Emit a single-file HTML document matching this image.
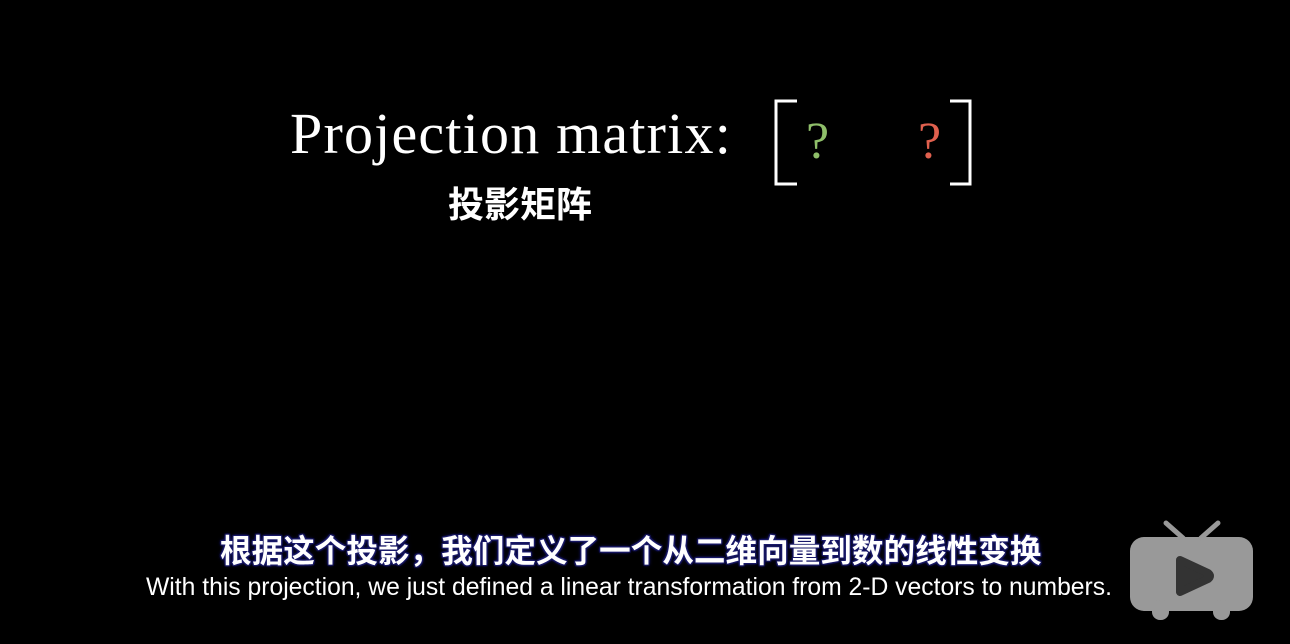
<!DOCTYPE html>
<html><head><meta charset="utf-8"><style>
html,body{margin:0;padding:0;background:#000;width:1290px;height:644px;overflow:hidden;position:relative}
.t{position:absolute;white-space:nowrap}
.title{left:290px;top:100px;font:58px "Liberation Serif",serif;color:#fff;letter-spacing:1.2px}
.sub{left:448px;top:176px;font:bold 36px "Liberation Sans","Noto Sans CJK SC",sans-serif;color:#fff}
.q{font:52px "Liberation Serif",serif;top:112px}
.zh{left:220px;top:526px;font:bold 31.6px "Liberation Sans","Noto Sans CJK SC",sans-serif;color:#fff;
text-shadow:0 0 2px #1a1a6a,1px 1px 1px #1a1a6a,-1px -1px 1px #1a1a6a,1px -1px 1px #1a1a6a,-1px 1px 1px #1a1a6a,0 0 4px #20208a}
.en{left:146px;top:574px;font:24.7px "Liberation Sans",sans-serif;color:#fff}
</style></head><body>
<div class="t title">Projection matrix:</div>
<div class="t sub">投影矩阵</div>
<svg class="t" style="left:0;top:0" width="1290" height="644">
<path d="M797 101 H776 V184 H797" fill="none" stroke="#fff" stroke-width="3"/>
<path d="M950 101 H970 V184 H950" fill="none" stroke="#fff" stroke-width="3"/>
<rect x="1130" y="537" width="123" height="74" rx="14" fill="#999"/>
<rect x="1152" y="600" width="17" height="20" rx="8" fill="#999"/>
<rect x="1213" y="600" width="17" height="20" rx="8" fill="#999"/>
<path d="M1166 523 L1183 538 M1218 523 L1201 538" stroke="#999" stroke-width="5" stroke-linecap="round"/>
<path d="M1180 560 L1208 573 Q1212 576 1208 579 L1180 592 Z" fill="#333" stroke="#333" stroke-width="8" stroke-linejoin="round"/>
</svg>
<div class="t q" style="left:806px;color:#8fbf6a">?</div>
<div class="t q" style="left:918px;color:#e0604e">?</div>
<div class="t zh">根据这个投影，我们定义了一个从二维向量到数的线性变换</div>
<div class="t en">With this projection, we just defined a linear transformation from 2-D vectors to numbers.</div>
</body></html>
